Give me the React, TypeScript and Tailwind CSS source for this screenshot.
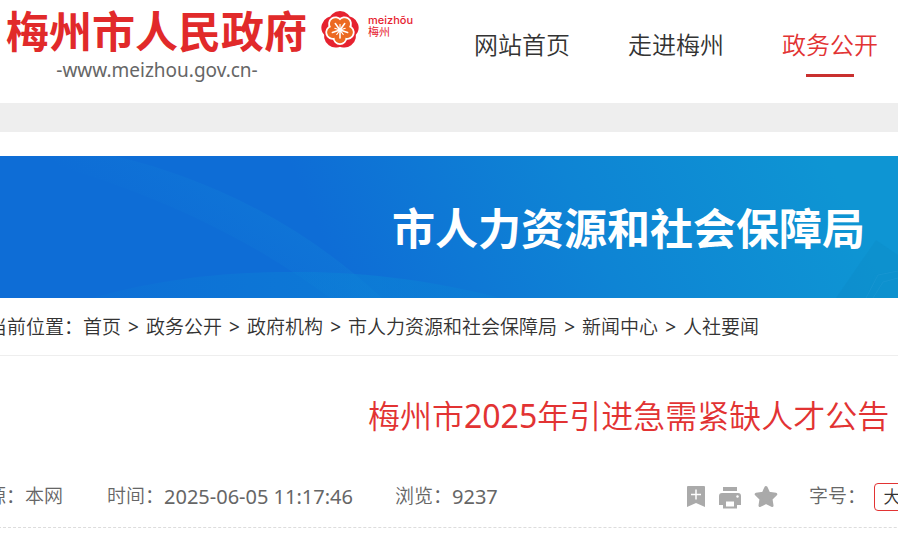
const navItems = [
  { label: "网站首页", active: false },
  { label: "走进梅州", active: false },
  { label: "政务公开", active: true },
];

const crumbs = ["首页", "政务公开", "政府机构", "市人力资源和社会保障局", "新闻中心", "人社要闻"];

const petalAngles = [0, 72, 144, 216, 288];
const rayAngles = [0, 36, 72, 108, 144, 180, 216, 252, 288, 324];

function Emblem() {
  return (
    <svg viewBox="-19 -19 38 38" className="h-[38px] w-[38px]" aria-hidden="true">
      <g fill="#e6222f">
        {petalAngles.map((a) => (
          <ellipse key={a} cx="0" cy="-9" rx="10.8" ry="10" transform={`rotate(${a})`} />
        ))}
      </g>
      <g fill="#ec6a22" stroke="#fff" strokeWidth="2.4">
        {petalAngles.map((a) => (
          <circle key={a} cx="0" cy="-7.6" r="6.2" transform={`rotate(${a + 36})`} />
        ))}
      </g>
      <g fill="#ec6a22">
        {petalAngles.map((a) => (
          <circle key={a} cx="0" cy="-7.6" r="5.6" transform={`rotate(${a + 36})`} />
        ))}
        <circle r="8" />
      </g>
      <g stroke="#fff" strokeLinecap="round">
        {rayAngles.map((a, i) => (
          <line
            key={a}
            x1="0"
            y1="-1"
            x2="0"
            y2={i % 2 ? -8 : -5.5}
            strokeWidth={i % 2 ? 1.6 : 1.1}
            transform={`rotate(${a})`}
          />
        ))}
      </g>
      <circle r="2" fill="#fff" />
    </svg>
  );
}

function BannerArt() {
  return (
    <svg
      viewBox="0 0 898 142"
      preserveAspectRatio="none"
      className="absolute inset-y-0 left-0 h-full w-screen"
      aria-hidden="true"
    >
      <defs>
        <linearGradient id="base" gradientUnits="userSpaceOnUse" x1="350" y1="142" x2="800" y2="-60">
          <stop offset="0" stopColor="#0e6dd6" />
          <stop offset="0.5" stopColor="#0e84d4" />
          <stop offset="1" stopColor="#0e95d3" />
        </linearGradient>
        <linearGradient id="arc" gradientUnits="userSpaceOnUse" x1="170" y1="90" x2="220" y2="20">
          <stop offset="0" stopColor="#1284d8" stopOpacity="0" />
          <stop offset="1" stopColor="#1284d8" stopOpacity="0.3" />
        </linearGradient>
        <linearGradient id="hill" x1="0" y1="0" x2="1" y2="0">
          <stop offset="0" stopColor="#0b86d6" stopOpacity="0.1" />
          <stop offset="0.7" stopColor="#0b86d6" stopOpacity="0.5" />
          <stop offset="1" stopColor="#0b86d6" stopOpacity="0.3" />
        </linearGradient>
      </defs>
      <rect width="898" height="142" fill="url(#base)" />
      <path d="M20 0H115C220 25 310 75 382 142H330C260 90 160 35 20 0Z" fill="url(#arc)" />
      <path d="M92 142C180 117 250 116 300 116C370 116 440 126 500 142Z" fill="url(#hill)" />
      <g fill="#0a82bd" opacity="0.2">
        <path d="M836 142L876 84L898 99V142Z" />
        <path d="M866 142L874 119L898 114V142Z" />
      </g>
      <path d="M866 142L878 119L898 115M873 142L883 126L898 122" fill="none" stroke="#35a5dc" strokeOpacity="0.25" />
    </svg>
  );
}

export default function App() {
  return (
    <div className="overflow-hidden bg-white font-['Noto_Sans','Noto_Sans_CJK_SC',sans-serif] text-[#333]">
      <div className="w-[140%]">
        <header className="flex h-[103px] items-start whitespace-nowrap pl-1.5">
          <a href="#home" className="w-[302px] pt-[9px]">
            <span className="block text-[43px] font-bold leading-[46px] text-[#e12a2a]">梅州市人民政府</span>
            <span className="block text-center text-[19px] leading-[30px] text-[#666]">-www.meizhou.gov.cn-</span>
          </a>
          <a href="#brand" className="ml-[13px] flex items-start gap-[9px] pt-[11px] text-[#e6222f]">
            <Emblem />
            <span className="w-[58px]">
              <span className="block font-['Inter',sans-serif] text-[11px] font-medium leading-[18px]">meizhõu</span>
              <span className="-mt-1 block font-['Noto_Sans_CJK_SC',sans-serif] text-[11px] leading-[12px]">梅州</span>
            </span>
          </a>
          <nav className="ml-12 flex gap-[58px] pt-7 text-[24px] font-[350] leading-[34px]">
            {navItems.map((item) => (
              <a
                key={item.label}
                href="#nav"
                aria-current={item.active ? "page" : undefined}
                className={item.active ? "flex flex-col items-center text-[#e23333]" : "block"}
              >
                {item.label}
                {item.active && <span className="mt-3 h-[3px] w-12 bg-[#c9302f]" />}
              </a>
            ))}
          </nav>
        </header>

        <div className="h-[29px] bg-[#eee]" />

        <section className="relative mt-6 flex h-[142px] items-center justify-center bg-[#0e95d3]">
          <BannerArt />
          <h2 className="relative pt-1 text-[43px] font-bold leading-[60px] text-white">市人力资源和社会保障局</h2>
        </section>

        <nav
          aria-label="当前位置"
          className="-ml-3 flex h-[58px] items-center whitespace-nowrap border-b border-[#eee] pt-0.5 text-[19px] font-[350]"
        >
          <span>当前位置：</span>
          {crumbs.map((c, i) => (
            <span key={c} className="flex">
              {i > 0 && <span className="w-[25px] text-center font-normal">&gt;</span>}
              <a href="#crumb">{c}</a>
            </span>
          ))}
        </nav>

        <main>
          <h1 className="pt-9 text-center text-[32px] font-[350] leading-[48px] text-[#e23333]">
            梅州市<span className="font-normal">2025</span>年引进急需紧缺人才公告
          </h1>
          <div className="-ml-8 mt-6 flex h-[64px] items-center whitespace-nowrap border-b border-dashed border-[#ddd] pt-0.5 text-[19px] font-[350] text-[#666]">
            <span className="w-[139px]">来源：本网</span>
            <span className="flex w-[288px] items-center">
              时间：<span className="text-[20px] font-normal leading-7">2025-06-05 11:17:46</span>
            </span>
            <span className="flex w-[291px] items-center">
              浏览：<span className="text-[20px] font-normal leading-7">9237</span>
            </span>
            <div className="flex w-[123px] items-center gap-3 text-[#aaa]">
              <button type="button" aria-label="收藏">
                <svg viewBox="0 0 20 24" className="h-6 w-5" fill="currentColor">
                  <path d="M2 1H18Q19 1 19 2V22L10 18L1 22V2Q1 1 2 1Z" />
                  <path d="M10 4.500V14.500M5 9.500H15" stroke="#fff" strokeWidth="1.500" />
                </svg>
              </button>
              <button type="button" aria-label="打印">
                <svg viewBox="0 0 24 24" className="h-6 w-6" fill="currentColor">
                  <path d="M5 2H19V6H5ZM4 8H20Q23 8 23 11V20H19V15H5V20H1V11Q1 8 4 8Z" />
                  <path d="M5 15H19V23.500H5Z" />
                  <path d="M8 16.500H16V21.500H8Z" fill="#fff" />
                  <circle cx="19.500" cy="11.500" r="1.200" fill="#fff" />
                </svg>
              </button>
              <button type="button" aria-label="关注">
                <svg viewBox="0 0 24 24" className="h-6 w-6" fill="currentColor" stroke="currentColor" strokeWidth="3" strokeLinejoin="round">
                  <path d="M12 2.500L14.800 8.300L21.800 9.300L17 14L18 20.500L12 17.500L6 20.500L7 14L2.200 9.300L9.200 8.300Z" />
                </svg>
              </button>
            </div>
            <span className="w-[65px]">字号：</span>
            <button type="button" className="h-7 w-9 rounded border border-[#e23333] text-[17px] leading-6 text-[#333]">
              大
            </button>
          </div>
        </main>
      </div>
    </div>
  );
}
